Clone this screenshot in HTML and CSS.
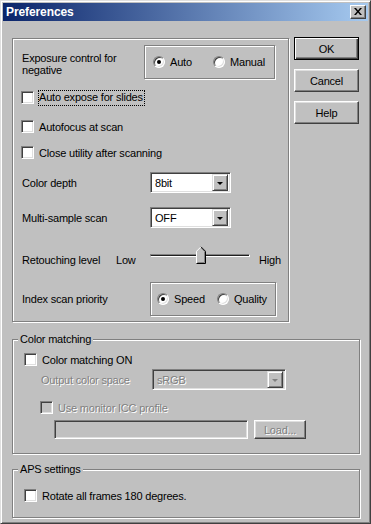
FILE: index.html
```html
<!DOCTYPE html>
<html>
<head>
<meta charset="utf-8">
<title>Preferences</title>
<link rel="stylesheet" href="styles.css">
</head>
<body>
<div class="window">
  <div class="titlebar">
    <span class="title">Preferences</span>
    <span class="close"><svg width="8" height="7" viewBox="0 0 8 7"><path d="M0 0h2l2 2.5L6 0h2L5 3.5 8 7H6L4 4.5 2 7H0l3-3.5z" fill="#000"/></svg></span>
  </div>
  <div class="body">
    <div class="mainbox">
      <div class="row r-exp">
        <div class="exp-label">Exposure control for<br>negative</div>
        <div class="radiogroup rg-exp">
          <span class="radio w60"><span class="rbtn on"></span>Auto</span>
          <span class="radio"><span class="rbtn"></span>Manual</span>
        </div>
      </div>
      <div class="row chkrow r-c1"><span class="chk"></span><span class="focus">Auto expose for slides</span></div>
      <div class="row chkrow r-c2"><span class="chk"></span><span class="ctext">Autofocus at scan</span></div>
      <div class="row chkrow r-c3"><span class="chk"></span><span class="ctext">Close utility after scanning</span></div>
      <div class="row comborow r-cd">
        <span class="lbl">Color depth</span>
        <div class="combo w80"><span class="val">8bit</span><span class="drop"><span class="tri"></span></span></div>
      </div>
      <div class="row comborow r-ms">
        <span class="lbl">Multi-sample scan</span>
        <div class="combo w80"><span class="val">OFF</span><span class="drop"><span class="tri"></span></span></div>
      </div>
      <div class="row r-sl">
        <span class="sl-lbl">Retouching level</span>
        <span class="sl-low">Low</span>
        <div class="slider">
          <span class="track"></span>
          <svg class="thumb" width="10" height="18" viewBox="0 0 10 18">
            <polygon points="0,5 5,0 10,5 10,18 0,18" fill="#c0c0c0"/>
            <polyline points="0.5,17.5 0.5,5.3 5,0.8" fill="none" stroke="#fff" stroke-width="1"/>
            <polyline points="5,0.8 9.5,5.3 9.5,17.5 0.5,17.5" fill="none" stroke="#000" stroke-width="1"/>
            <polyline points="5,1.9 8.5,5.5 8.5,16.5 1.5,16.5" fill="none" stroke="#808080" stroke-width="1"/>
          </svg>
        </div>
        <span class="sl-high">High</span>
      </div>
      <div class="row r-ix">
        <span class="lbl">Index scan priority</span>
        <div class="radiogroup rg-ix">
          <span class="radio w60"><span class="rbtn on"></span>Speed</span>
          <span class="radio"><span class="rbtn"></span>Quality</span>
        </div>
      </div>
    </div>

    <div class="buttons">
      <span class="btn default">OK</span>
      <span class="btn">Cancel</span>
      <span class="btn">Help</span>
    </div>

    <fieldset class="group gm">
      <legend>Color matching</legend>
      <div class="gcontent">
        <div class="row chkrow g-c1"><span class="chk"></span><span class="ctext">Color matching ON</span></div>
        <div class="row comborow g-out">
          <span class="lbl dis w112">Output color space</span>
          <div class="combo w134 combodis"><span class="val dis">sRGB</span><span class="drop"><span class="tri tridis"></span></span></div>
        </div>
        <div class="row chkrow g-icc"><span class="chk chkdis"></span><span class="ctext dis">Use monitor ICC profile</span></div>
        <div class="row g-load">
          <span class="textbox"></span>
          <span class="btn btn-load dis">Load...</span>
        </div>
      </div>
    </fieldset>

    <fieldset class="group ga">
      <legend>APS settings</legend>
      <div class="gcontent">
        <div class="row chkrow g-rot"><span class="chk"></span><span class="ctext">Rotate all frames 180 degrees.</span></div>
      </div>
    </fieldset>
  </div>
</div>
</body>
</html>
```

FILE: styles.css
```css
html, body {
  margin: 0;
  padding: 0;
  background: #c0c0c0;
}
body {
  font-family: "Liberation Sans", Arial, sans-serif;
  font-size: 11px;
  letter-spacing: -0.2px;
  color: #000;
}
.window {
  box-sizing: border-box;
  width: 371px;
  height: 524px;
  padding: 2px;
  background: #c0c0c0;
  border: 1px solid;
  border-color: #dfdfdf #404040 #404040 #dfdfdf;
  box-shadow: inset 1px 1px #fff, inset -1px -1px #808080;
}
.titlebar {
  height: 18px;
  background: linear-gradient(to right, #0a246a, #a6caf0);
  display: flex;
  align-items: center;
  justify-content: space-between;
  padding: 0 2px 0 3px;
}
.title {
  color: #fff;
  font-weight: bold;
  font-size: 12px;
  letter-spacing: -0.1px;
}
.close {
  box-sizing: border-box;
  width: 16px;
  height: 14px;
  background: #c0c0c0;
  border: 1px solid;
  border-color: #fff #404040 #404040 #fff;
  box-shadow: inset -1px -1px #808080;
  display: flex;
  align-items: center;
  justify-content: center;
  padding: 0 1px 1px 0;
}
.close svg { display: block; }

.body {
  display: grid;
  grid-template-columns: 277px 65px;
  column-gap: 5px;
  padding: 17px 0 0 9px;
  align-items: start;
}

/* etched boxes */
.mainbox, .radiogroup, .group {
  border: 1px solid #808080;
  box-shadow: inset 1px 1px #fff, 1px 1px #fff;
}
.mainbox {
  box-sizing: border-box;
  height: 284px;
  padding: 6px 0 5px 8px;
  display: flex;
  flex-direction: column;
}
.row {
  display: flex;
  align-items: center;
}
.r-exp { height: 34px; align-items: stretch; }
.exp-label {
  width: 123px;
  line-height: 12px;
  padding: 7px 0 0 1px;
  box-sizing: border-box;
}
.radiogroup {
  box-sizing: border-box;
  height: 34px;
  display: flex;
  align-items: center;
}
.rg-exp { width: 131px; padding-left: 8px; }
.rg-ix { width: 126px; padding-left: 6px; }
.radio {
  display: flex;
  align-items: center;
  gap: 5px;
}
.w60 { width: 60px; }
.rbtn {
  box-sizing: border-box;
  width: 12px;
  height: 12px;
  border-radius: 50%;
  background: #fff;
  border: 1px solid;
  border-color: #808080 #fff #fff #808080;
  box-shadow: inset 1px 1px #404040, inset -1px -1px #dfdfdf;
  display: flex;
  align-items: center;
  justify-content: center;
}
.rbtn.on::after {
  content: "";
  width: 4px;
  height: 4px;
  border-radius: 50%;
  background: #000;
}

.chkrow { height: 15px; gap: 4px; }
.chk {
  box-sizing: border-box;
  width: 13px;
  height: 13px;
  background: #fff;
  border: 1px solid;
  border-color: #808080 #fff #fff #808080;
  box-shadow: inset 1px 1px #404040, inset -1px -1px #dfdfdf;
  flex: none;
}
.chkdis { background: #c0c0c0; }
.ctext { padding-left: 1px; }
.focus {
  border: 1px dotted #000;
  padding: 0 1px 1px 0;
  line-height: 13px;
}
.r-c1 { margin-top: 11px; }
.r-c2 { margin-top: 14px; }
.r-c3 { margin-top: 11px; }

.comborow { height: 21px; }
.lbl { width: 129px; padding-left: 1px; box-sizing: border-box; }
.w112 { width: 112px; }
.r-cd { margin-top: 12px; }
.r-ms { margin-top: 14px; }
.combo {
  box-sizing: border-box;
  height: 21px;
  background: #fff;
  border: 1px solid;
  border-color: #808080 #fff #fff #808080;
  box-shadow: inset 1px 1px #404040, inset -1px -1px #dfdfdf;
  padding: 2px;
  display: flex;
  align-items: center;
  justify-content: space-between;
}
.w80 { width: 81px; }
.w134 { width: 134px; }
.combodis { background: #c0c0c0; }
.val { padding-left: 2px; }
.drop {
  box-sizing: border-box;
  width: 16px;
  height: 17px;
  background: #c0c0c0;
  border: 1px solid;
  border-color: #dfdfdf #404040 #404040 #dfdfdf;
  box-shadow: inset 1px 1px #fff, inset -1px -1px #808080;
  display: flex;
  align-items: center;
  justify-content: center;
}
.tri {
  width: 0;
  height: 0;
  border-left: 3px solid transparent;
  border-right: 3px solid transparent;
  border-top: 3px solid #000;
  margin-top: 1px;
}
.tridis { border-top-color: #808080; }

.r-sl { margin-top: 17px; height: 24px; align-items: flex-start; }
.sl-lbl, .sl-low, .sl-high { line-height: 13px; margin-top: 9px; }
.sl-lbl { width: 95px; padding-left: 1px; box-sizing: border-box; }
.sl-low { width: 34px; }
.sl-high { margin-left: 9px; }
.slider {
  position: relative;
  width: 100px;
  height: 20px;
}
.track {
  position: absolute;
  left: 0;
  right: 0;
  top: 9px;
  box-sizing: border-box;
  height: 3px;
  border-top: 1px solid #808080;
  border-bottom: 1px solid #fff;
  border-left: 1px solid #808080;
  border-right: 1px solid #fff;
  background: #202020;
}
.thumb {
  position: absolute;
  left: 46px;
  top: 1px;
}
.r-ix { margin-top: 13px; height: 34px; }

.buttons {
  display: flex;
  flex-direction: column;
  gap: 9px;
  margin-top: -1px;
}
.btn {
  box-sizing: border-box;
  height: 23px;
  background: #c0c0c0;
  border: 1px solid;
  border-color: #fff #404040 #404040 #fff;
  box-shadow: inset -1px -1px #808080, inset 1px 1px #dfdfdf;
  display: flex;
  align-items: center;
  justify-content: center;
}
.btn.default {
  border-color: #000;
  box-shadow: inset 1px 1px #fff, inset -1px -1px #404040, inset -2px -2px #808080;
}

.group {
  grid-column: 1 / 3;
  margin: 11px 0 0;
  padding: 0 0 14px 0;
  min-width: 0;
  width: 348px;
  box-sizing: border-box;
}
.group legend {
  margin-left: 5px;
  padding: 0 2px;
  line-height: 13px;
  background: #c0c0c0;
}
.gcontent {
  display: flex;
  flex-direction: column;
  padding-left: 11px;
}
.g-c1 { margin-top: 6px; height: 15px; }
.g-out { margin-top: 2px; padding-left: 16px; }
.g-icc { margin-top: 10px; padding-left: 16px; }
.g-load { margin-top: 5px; padding-left: 30px; height: 19px; gap: 6px; }
.textbox {
  box-sizing: border-box;
  width: 194px;
  height: 19px;
  background: #c0c0c0;
  border: 1px solid;
  border-color: #808080 #fff #fff #808080;
  box-shadow: inset 1px 1px #404040, inset -1px -1px #dfdfdf;
}
.btn-load { width: 52px; height: 19px; }
.dis {
  color: #808080;
  text-shadow: 1px 1px #fff;
}
.ga { margin-top: 9px; }
.g-rot { margin-top: 12px; }
```
